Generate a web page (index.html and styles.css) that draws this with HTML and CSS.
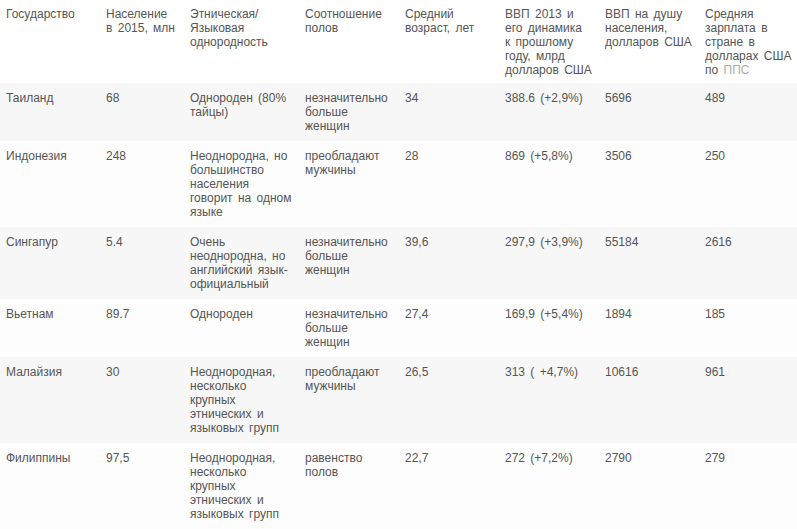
FILE: index.html
```html
<!DOCTYPE html>
<html lang="ru">
<head>
<meta charset="utf-8">
<link rel="stylesheet" href="styles.css">
</head>
<body>
<table class="data">
  <colgroup>
    <col class="c1"><col class="c2"><col class="c3"><col class="c4"><col class="c5"><col class="c6"><col class="c7"><col class="c8">
  </colgroup>
  <thead>
    <tr>
      <th>Государство</th>
      <th>Население в 2015, млн</th>
      <th>Этническая/ Языковая однородность</th>
      <th>Соотношение полов</th>
      <th>Средний возраст, лет</th>
      <th>ВВП 2013 и его динамика к прошлому году, млрд долларов США</th>
      <th>ВВП на душу населения, долларов США</th>
      <th>Средняя зарплата в стране в долларах США по <a class="link" href="#">ППС</a></th>
    </tr>
  </thead>
  <tbody>
    <tr>
      <td>Таиланд</td><td>68</td><td>Однороден (80% тайцы)</td><td>незначительно больше женщин</td><td>34</td><td>388.6 (+2,9%)</td><td>5696</td><td>489</td>
    </tr>
    <tr>
      <td>Индонезия</td><td>248</td><td>Неоднородна, но большинство населения говорит на одном языке</td><td>преобладают мужчины</td><td>28</td><td>869 (+5,8%)</td><td>3506</td><td>250</td>
    </tr>
    <tr>
      <td>Сингапур</td><td>5.4</td><td>Очень неоднородна, но английский язык-официальный</td><td>незначительно больше женщин</td><td>39,6</td><td>297,9 (+3,9%)</td><td>55184</td><td>2616</td>
    </tr>
    <tr>
      <td>Вьетнам</td><td>89.7</td><td>Однороден</td><td>незначительно больше женщин</td><td>27,4</td><td>169,9 (+5,4%)</td><td>1894</td><td>185</td>
    </tr>
    <tr>
      <td>Малайзия</td><td>30</td><td>Неоднородная, несколько крупных этнических и языковых групп</td><td>преобладают мужчины</td><td>26,5</td><td>313 ( +4,7%)</td><td>10616</td><td>961</td>
    </tr>
    <tr>
      <td>Филиппины</td><td>97,5</td><td>Неоднородная, несколько крупных этнических и языковых групп</td><td>равенство полов</td><td>22,7</td><td>272 (+7,2%)</td><td>2790</td><td>279</td>
    </tr>
  </tbody>
</table>
</body>
</html>
```
FILE: styles.css
```css
html, body {
  margin: 0;
  padding: 0;
  background: #ffffff;
}
body {
  font-family: "Liberation Sans", Arial, sans-serif;
  font-size: 12px;
  line-height: 14px;
  word-spacing: 2px;
  color: #555555;
}
.data {
  width: 797px;
  table-layout: fixed;
  border-collapse: collapse;
  border-spacing: 0;
}
.c1 { width: 100px; }
.c2 { width: 84px; }
.c3 { width: 115px; }
.c4 { width: 100px; }
.c5 { width: 100px; }
.c6 { width: 100px; }
.c7 { width: 100px; }
.c8 { width: 98px; }
.data th,
.data td {
  text-align: left;
  vertical-align: top;
  font-weight: normal;
  padding: 8px 6.5px 8px 6px;
}
.data thead th {
  padding-top: 7px;
  padding-bottom: 6px;
}
.data th:last-child,
.data td:last-child {
  padding-right: 4px;
}
.data thead tr { background: #ffffff; }
.data tbody tr:nth-child(odd) { background: #f7f7f7; }
.data tbody tr:nth-child(even) { background: #fdfdfd; }
.link {
  color: #aaaaaa;
  text-decoration: none;
}
```
